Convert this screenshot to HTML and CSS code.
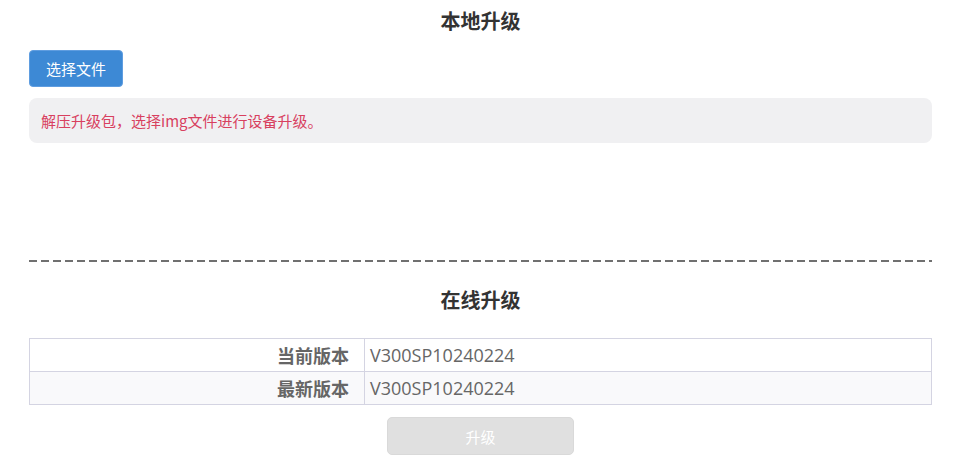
FILE: index.html
```html
<!DOCTYPE html>
<html lang="zh-CN">
<head>
  <meta charset="UTF-8">
  <meta name="viewport" content="width=device-width, initial-scale=1.0">
  <title>系统升级</title>
  <link rel="stylesheet" href="styles.css">
</head>
<body>
  <div class="page">
    <!-- 本地升级 -->
    <section class="local">
      <h2 class="title">本地升级</h2>
      <button class="btn-file">选择文件</button>
      <div class="tip">解压升级包，选择img文件进行设备升级。</div>
    </section>

    <div class="divider"></div>

    <!-- 在线升级 -->
    <section class="online">
      <h2 class="title">在线升级</h2>
      <table class="version-table">
        <tbody>
          <tr>
            <th scope="row">当前版本</th>
            <td>V300SP10240224</td>
          </tr>
          <tr>
            <th scope="row">最新版本</th>
            <td>V300SP10240224</td>
          </tr>
        </tbody>
      </table>
      <div class="actions">
        <button class="btn-upgrade" disabled>升级</button>
      </div>
    </section>
  </div>
</body>
</html>
```

FILE: styles.css
```css
/* 升级页面 */
body{
  margin: 0;
  background-color: #fff;
  font-family: "Open Sans", "Noto Sans CJK SC", sans-serif;
  color: #333;
}
.page{
  width: 903px;
  margin-left: 29px;
}
.title{
  margin: 0;
  font-size: 20px;
  line-height: 24px;
  font-weight: bold;
  text-align: center;
  color: #333;
}
.local{
  padding-top: 10px;
  .title {
    margin-bottom: 16px;
  }
}
.btn-file{
  display: block;
  width: 94px;
  height: 37px;
  padding: 0;
  border: 1px solid #5f9de0;
  border-radius: 4px;
  background-color: #3d89d5;
  color: #fff;
  font-family: "Noto Sans CJK SC", sans-serif;
  font-size: 15px;
}
.tip{
  margin-top: 11px;
  height: 45px;
  line-height: 45px;
  padding-left: 12px;
  border-radius: 8px;
  background-color: #f0f0f2;
  color: #d8405f;
  font-family: "Noto Sans CJK SC", sans-serif;
  font-size: 15px;
}
.divider{
  margin-top: 117px;
  height: 2px;
  background: repeating-linear-gradient(90deg, #707070 0 8px, transparent 8px 12px);
}
.online{
  padding-top: 27px;
  .title {
    margin-bottom: 25px;
  }
}
.version-table{
  width: 100%;
  border-collapse: collapse;
  border: 1px solid #d4d4e2;
  color: #666;
  th, td {
    border: 1px solid #d4d4e2;
    height: 32px;
    padding: 0;
  }
  th {
    width: 319px;
    padding-right: 15px;
    text-align: right;
    font-family: "Noto Sans CJK SC", sans-serif;
    font-size: 18px;
    font-weight: bold;
  }
  td {
    padding-left: 5px;
    font-size: 18px;
  }
  tr:nth-child(2) {
    background-color: #f9f9fb;
  }
}
.actions{
  display: flex;
  justify-content: center;
  padding-top: 12px;
}
.btn-upgrade{
  width: 187px;
  height: 38px;
  border: 1px solid #d9d9d9;
  border-radius: 5px;
  background-color: #e0e0e0;
  color: #fff;
  font-family: "Noto Sans CJK SC", sans-serif;
  font-size: 15px;
}
```
